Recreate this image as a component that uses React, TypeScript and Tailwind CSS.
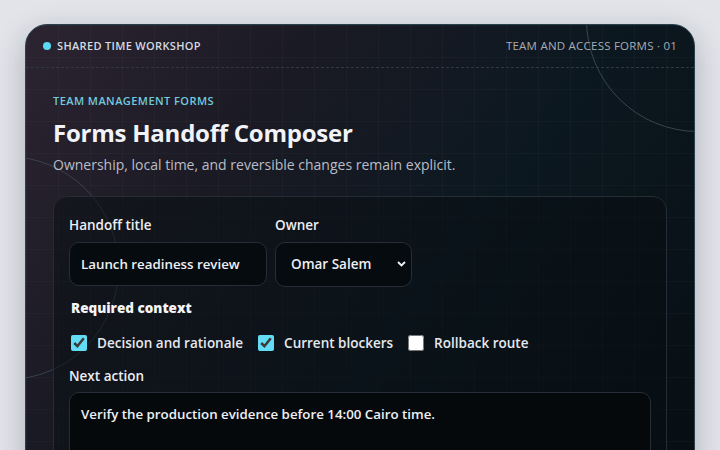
import { useState } from "react";

const font = { fontFamily: '"Open Sans", "Noto Sans", sans-serif' };

export default function App() {
  const [title, setTitle] = useState("Launch readiness review");
  const [owner, setOwner] = useState("Omar Salem");
  const [context, setContext] = useState({
    decision: true,
    blockers: true,
    rollback: false,
  });

  return (
    <div
      className="h-[450px] w-[720px] overflow-hidden bg-[#e2e4e9] px-[25px] pt-[24px]"
      style={font}
    >
      <div className="relative h-[460px] overflow-hidden rounded-[22px] border border-[#27414b] bg-[linear-gradient(125deg,#2c2431_0%,#1a1a24_30%,#0c1820_60%,#070e13_100%)] shadow-[0_10px_30px_rgba(15,23,42,0.25)]">
        {/* grid */}
        <div className="pointer-events-none absolute inset-0 bg-[linear-gradient(rgba(255,255,255,0.022)_1px,transparent_1px),linear-gradient(90deg,rgba(255,255,255,0.022)_1px,transparent_1px)] bg-[size:32px_32px]" />
        {/* rings */}
        <div className="pointer-events-none absolute left-[560px] top-[-117px] h-[224px] w-[224px] rounded-full border border-[#4a5a66]/70" />
        <div className="pointer-events-none absolute left-[-131px] top-[131px] h-[224px] w-[224px] rounded-full border border-[#4a5a66]/60" />

        <div className="relative">
          <header className="flex h-[43px] items-center justify-between border-b border-dashed border-[#313842] pl-[17px] pr-[17px]">
            <div className="flex items-center gap-[6px]">
              <span className="h-[8px] w-[8px] rounded-full bg-[#5cd9f2]" />
              <span className="text-[11px] font-semibold tracking-[0.03em] text-[#d6d9e0]">
                SHARED TIME WORKSHOP
              </span>
            </div>
            <span className="text-[11.5px] font-medium tracking-[0.02em] text-[#a7adb7]">
              TEAM AND ACCESS FORMS · 01
            </span>
          </header>

          <main className="px-[27px] pt-[25px]">
            <p className="text-[11px] font-semibold tracking-[0.04em] text-[#72c9de]">
              TEAM MANAGEMENT FORMS
            </p>
            <h1 className="mt-[7px] text-[24px] font-bold leading-[32px] tracking-[-0.01em] text-[#f2f3f8]">
              Forms Handoff Composer
            </h1>
            <p className="mt-[5px] text-[14px] font-medium text-[#b9bdc7]">
              Ownership, local time, and reversible changes remain explicit.
            </p>

            <form className="mt-[21px] w-[614px] rounded-[14px] border border-[#242c35] bg-[#070d12]/50 px-[15px] pt-[18px] pb-[20px]">
              <div className="flex gap-[8px]">
                <label className="flex w-[198px] flex-col gap-[7px]">
                  <span className="text-[13.5px] font-semibold text-[#eceef3]">
                    Handoff title
                  </span>
                  <input
                    value={title}
                    onChange={(e) => setTitle(e.target.value)}
                    className="h-[44px] rounded-[10px] border border-[#262d36] bg-[#060b0f] px-[11px] text-[13.3px] font-semibold text-[#eef0f5] outline-none"
                  />
                </label>
                <label className="flex w-[137px] flex-col gap-[7px]">
                  <span className="text-[13.5px] font-semibold text-[#eceef3]">
                    Owner
                  </span>
                  <div className="relative">
                    <select
                      value={owner}
                      onChange={(e) => setOwner(e.target.value)}
                      className="h-[45px] w-full appearance-none rounded-[10px] border border-[#262d36] bg-[#060b0f] pl-[15px] text-[13.5px] font-semibold text-[#eef0f5] outline-none"
                    >
                      <option>Omar Salem</option>
                      <option>Lina Haddad</option>
                      <option>Karim Nasser</option>
                    </select>
                    <svg
                      className="pointer-events-none absolute right-[6px] top-[19px]"
                      width="9"
                      height="6"
                      viewBox="0 0 9 6"
                      fill="none"
                    >
                      <path d="M1 1l3.5 3.5L8 1" stroke="#f1f3f7" strokeWidth="1.8" />
                    </svg>
                  </div>
                </label>
              </div>

              <fieldset className="mt-[11px]">
                <legend className="px-[2px] text-[13.5px] font-extrabold text-[#f4f5f8]">
                  Required context
                </legend>
                <div className="mt-[15px] flex items-center gap-[15px] pl-[2px]">
                  {[
                    { key: "decision", label: "Decision and rationale" },
                    { key: "blockers", label: "Current blockers" },
                    { key: "rollback", label: "Rollback route" },
                  ].map((item) => (
                    <label key={item.key} className="flex items-center gap-[10px]">
                      <input
                        type="checkbox"
                        checked={context[item.key as keyof typeof context]}
                        onChange={(e) =>
                          setContext({ ...context, [item.key]: e.target.checked })
                        }
                        className="m-0 h-[16px] w-[16px] accent-[#62ddf5]"
                      />
                      <span className="text-[13.5px] font-semibold text-[#e6e8ee]">
                        {item.label}
                      </span>
                    </label>
                  ))}
                </div>
              </fieldset>

              <label className="mt-[13px] flex flex-col gap-[5px]">
                <span className="text-[13.5px] font-semibold text-[#eceef3]">
                  Next action
                </span>
                <textarea
                  defaultValue="Verify the production evidence before 14:00 Cairo time."
                  className="h-[110px] resize-none rounded-[10px] border border-[#262d36] bg-[#05090c] px-[11px] py-[12px] text-[13.3px] font-semibold text-[#eef0f5] outline-none"
                />
              </label>
            </form>
          </main>
        </div>
      </div>
    </div>
  );
}
